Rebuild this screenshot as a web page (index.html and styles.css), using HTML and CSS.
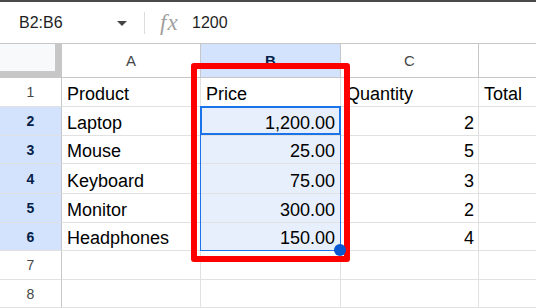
FILE: index.html
```html
<!DOCTYPE html>
<html lang="en">
<head>
    <meta charset="UTF-8">
    <title>Sheet - price range</title>
    <link rel="stylesheet" href="styles.css">
</head>
<body>
    <div class="formula-bar">
        <div class="name-box">
            <span class="range-name">B2:B6</span>
            <span class="caret"></span>
        </div>
        <div class="divider"></div>
        <span class="fx">fx</span>
        <span class="formula">1200</span>
    </div>

    <div class="sheet">
        <div class="grid">
            <div class="corner"></div>
            <div class="col-head">A</div>
            <div class="col-head selected">B</div>
            <div class="col-head">C</div>
            <div class="col-head last"></div>

            <div class="row-head">1</div>
            <div class="cell">Product</div>
            <div class="cell">Price</div>
            <div class="cell">Quantity</div>
            <div class="cell last">Total</div>

            <div class="row-head selected">2</div>
            <div class="cell">Laptop</div>
            <div class="cell num picked">1,200.00</div>
            <div class="cell num">2</div>
            <div class="cell last"></div>

            <div class="row-head selected">3</div>
            <div class="cell">Mouse</div>
            <div class="cell num picked">25.00</div>
            <div class="cell num">5</div>
            <div class="cell last"></div>

            <div class="row-head selected">4</div>
            <div class="cell">Keyboard</div>
            <div class="cell num picked">75.00</div>
            <div class="cell num">3</div>
            <div class="cell last"></div>

            <div class="row-head selected">5</div>
            <div class="cell">Monitor</div>
            <div class="cell num picked">300.00</div>
            <div class="cell num">2</div>
            <div class="cell last"></div>

            <div class="row-head selected">6</div>
            <div class="cell">Headphones</div>
            <div class="cell num picked">150.00</div>
            <div class="cell num">4</div>
            <div class="cell last"></div>

            <div class="row-head">7</div>
            <div class="cell"></div>
            <div class="cell"></div>
            <div class="cell"></div>
            <div class="cell last"></div>

            <div class="row-head">8</div>
            <div class="cell"></div>
            <div class="cell"></div>
            <div class="cell"></div>
            <div class="cell last"></div>
        </div>

        <!-- selection overlays -->
        <div class="range-outline"></div>
        <div class="active-cell"></div>
        <div class="red-box"></div>
        <div class="fill-handle"></div>
    </div>
</body>
</html>
```

FILE: styles.css
```css
body {
    margin: 0;
    padding: 0;
    font-family: "Liberation Sans", Arial, sans-serif;
    background: white;
    border-top: 2px solid #4a4a4a;
    width: 536px;
    height: 306px;
    overflow: hidden;
}

/* formula bar */
.formula-bar {
    display: flex;
    align-items: center;
    height: 41px;
    border-bottom: 1px solid #c7c7c7;
    padding-left: 19px;
}

.name-box {
    display: flex;
    align-items: center;
    width: 108px;
}

.range-name {
    width: 98px;
    font-size: 16px;
    color: #1f1f1f;
}

.caret {
    width: 0;
    height: 0;
    border-left: 5px solid transparent;
    border-right: 5px solid transparent;
    border-top: 5px solid #444;
    margin-top: 1px;
}

.divider {
    width: 1px;
    height: 22px;
    background: #dadce0;
    margin-left: 17px;
}

.fx {
    margin-left: 15px;
    font-family: "Liberation Serif", serif;
    font-style: italic;
    font-size: 23px;
    color: #a0a0a0;
    letter-spacing: 1px;
    width: 19px;
}

.formula {
    margin-left: 13px;
    font-size: 16px;
    color: #1f1f1f;
}

/* grid */
.sheet {
    position: relative;
}

.grid {
    display: grid;
    grid-template-columns: 62px 139px 140px 138px 57px;
    grid-template-rows: 34px 29px 29px 28px 30px 29px 28px 29px 28px;
}

.grid > div {
    box-sizing: border-box;
    border-right: 1px solid #e1e1e1;
    border-bottom: 1px solid #e1e1e1;
}

.corner {
    background: #f8f9fa;
    box-shadow: inset -6px -6px 0 #c7c7c7;
    border-color: #c7c7c7 !important;
}

.col-head {
    display: flex;
    align-items: center;
    justify-content: center;
    font-size: 15px;
    color: #444746;
    border-color: #c7c7c7 !important;
}

.col-head.selected {
    background: #d3e3fd;
    color: #041e49;
    font-weight: bold;
}

.row-head {
    display: flex;
    align-items: center;
    justify-content: center;
    font-size: 14px;
    color: #444746;
    border-right-color: #c7c7c7 !important;
}

.row-head.selected {
    background: #d3e3fd;
    color: #041e49;
    font-weight: bold;
}

.cell {
    display: flex;
    align-items: flex-end;
    padding: 0 5px 1px;
    font-size: 18px;
    color: #000;
    white-space: nowrap;
}

.cell.num {
    justify-content: flex-end;
    padding-right: 4px;
}

.cell.picked {
    background: #e7effd;
    padding-right: 5px;
}

.grid > .last {
    border-right: none;
}

/* selection */
.range-outline {
    position: absolute;
    left: 200px;
    top: 62px;
    width: 141px;
    height: 145px;
    box-sizing: border-box;
    border: 1px solid #1a73e8;
}

.active-cell {
    position: absolute;
    left: 200px;
    top: 62px;
    width: 141px;
    height: 29px;
    box-sizing: border-box;
    border: 2px solid #1a73e8;
}

.red-box {
    position: absolute;
    left: 191px;
    top: 19px;
    width: 159px;
    height: 199px;
    box-sizing: border-box;
    border: 6px solid #ff0000;
    border-radius: 3px;
}

.fill-handle {
    position: absolute;
    left: 334px;
    top: 200px;
    width: 12px;
    height: 12px;
    border-radius: 50%;
    background: #0b57d0;
}
```
